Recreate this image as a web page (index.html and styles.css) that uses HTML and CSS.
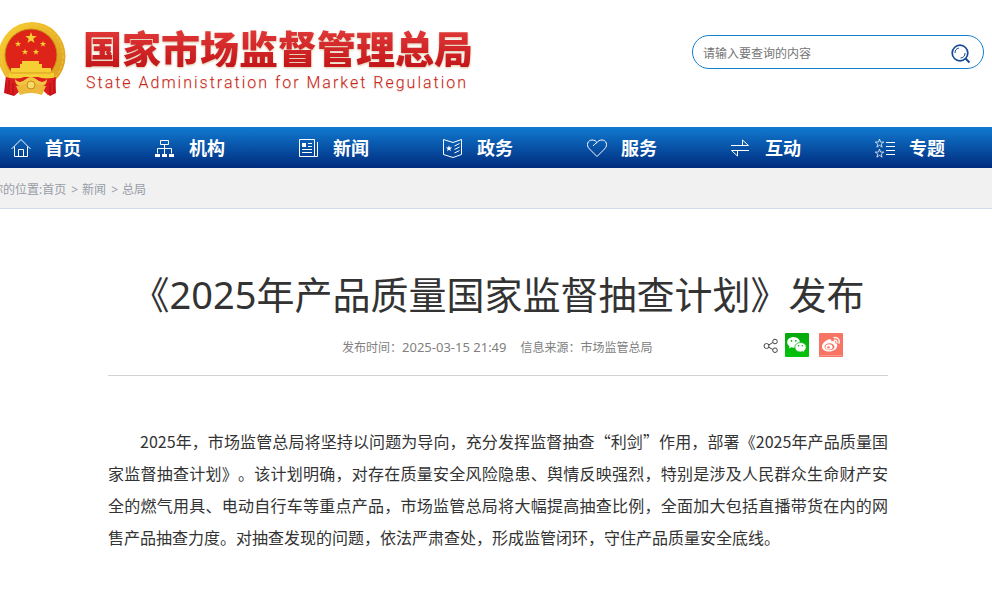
FILE: index.html
```html
<!DOCTYPE html>
<html lang="zh-CN">
<head>
<meta charset="utf-8">
<meta name="viewport" content="width=device-width, initial-scale=1">
<title>《2025年产品质量国家监督抽查计划》发布</title>
<link rel="stylesheet" href="styles.css">
</head>
<body>
<svg class="defs" width="0" height="0" aria-hidden="true">
  <defs>
    <linearGradient id="gold" x1="0" y1="0" x2="1" y2="1">
      <stop offset="0" stop-color="#f8d030"/><stop offset=".5" stop-color="#eab52a"/><stop offset="1" stop-color="#d99a1c"/>
    </linearGradient>
    <linearGradient id="green" x1="0" y1="0" x2="0" y2="1">
      <stop offset="0" stop-color="#04a80c"/><stop offset="1" stop-color="#06c40c"/>
    </linearGradient>
    <path id="star" d="M0-6 1.4-1.9 5.7-1.9 2.3.7 3.5 4.9 0 2.4-3.5 4.9-2.3.7-5.7-1.9-1.4-1.9Z"/>
  </defs>
</svg>

<header class="header">
  <a class="brand" href="#">
    <svg class="emblem" viewBox="0 0 66 76" aria-hidden="true">
      <path d="M6 54 4 72 14 75 20 70 44 70 50 75 56 72 55 54Z" fill="#c9131a"/>
      <ellipse cx="32" cy="35" rx="33.500" ry="34" fill="url(#gold)"/>
      <ellipse cx="32" cy="35" rx="31" ry="31.500" fill="none" stroke="#f2cb42" stroke-width="1" stroke-dasharray="3 2"/>
      <circle cx="31" cy="34" r="26" fill="#de2418" stroke="#c78c18"/>
      <g fill="#f6cf35">
        <use href="#star" transform="translate(31 17)"/>
        <use href="#star" transform="translate(18 23) scale(.55)"/>
        <use href="#star" transform="translate(43 23) scale(.55)"/>
        <use href="#star" transform="translate(25 31) scale(.55)"/>
        <use href="#star" transform="translate(36 31) scale(.55)"/>
        <path d="M22 40H39V43H42V47H51V52H54V57H9V52H11V47H20V43H22Z"/>
      </g>
      <path d="M11 52H51" stroke="#d99b24"/>
      <path d="M6 56Q17 59 24 56L38 56Q47 59 56 56L55 71 48 74 42 68H21L15 74 8 71Z" fill="#dc1c1e"/>
      <path d="M15 58Q19 64 26 58 31 54 36 58 43 64 47 58 47 67 37 64 31 61 25 64 15 67 15 58Z" fill="#f2c641"/>
      <path d="M16 65Q31 60 46 65L42 74Q31 70 20 74Z" fill="#edb93b"/>
      <path d="M9 59V71M13 62V73M50 62V73M54 59V71" stroke="#a90d14" stroke-width="1"/>
      <circle cx="31" cy="64" r="4" fill="#f8dc68" stroke="#c7891c"/>
    </svg>
    <span class="brand-text">
      <span class="brand-name">国家市场监督管理总局</span>
      <span class="brand-en">State Administration for Market Regulation</span>
    </span>
  </a>
  <form class="search">
    <input type="text" aria-label="查询内容" placeholder="请输入要查询的内容">
    <button type="button" aria-label="查询">
      <svg viewBox="0 0 20 20" fill="none" stroke="#164a94" aria-hidden="true"><circle cx="9" cy="9" r="7.800" stroke-width="1.700"/><path d="M14.500 14.500 18.500 18.500" stroke-width="2"/><path d="M4 9A5 5 0 0 1 8 4M14 9A5 5 0 0 1 9.500 14" stroke-width="1"/></svg>
    </button>
  </form>
</header>

<nav class="nav">
  <a href="#"><svg viewBox="0 0 20 20"><path d="M.5 11 10 1.500 19.500 11M3.500 8.500V18.500H16.500V8.500M7.500 18.500V11.500H12.500V18.500"/></svg>首页</a>
  <a href="#"><svg viewBox="0 0 20 20"><path d="M5.500 2.500H13.500V6.500H5.500ZM9.500 6.500V16M2.500 15.500V10.500H16.500V15.500"/><path class="solid" d="M0 16H5V19H0ZM7 16H12V19H7ZM14 16H19V19H14Z"/></svg>机构</a>
  <a href="#"><svg viewBox="0 0 20 20"><path d="M.5 1.500H15.500V18.500H.5ZM15.500 18.500H18.500V4M9 5.500H13M9 8.500H13M3 11.500H13M3 14.500H13"/><path class="solid" d="M3 5H7V9H3Z"/></svg>新闻</a>
  <a href="#"><svg viewBox="0 0 20 20"><path d="M.5 1.500 10 4.500 18.500 1.500V16.500L10 19.500.5 16.500ZM11.500 8 16.500 5.500M11.500 11.500 16.500 9M11.500 15 16.500 12.500"/><use class="solid" href="#star" transform="translate(6 10.500) scale(.55)"/></svg>政务</a>
  <a href="#"><svg viewBox="0 0 20 20"><path d="M10 18.500 2.500 11C-1.500 7 1 2 5 2 7.500 2 9 3 10 4.500 11 3 12.500 2 15 2 19 2 21.500 7 17.500 11ZM6 8Q7.500 6 10 4.500"/></svg>服务</a>
  <a href="#"><svg viewBox="0 0 20 20"><path d="M0 7.500H17.500L11.500 2V7M18 12.500H.5L6.500 18V13"/></svg>互动</a>
  <a href="#"><svg viewBox="0 0 20 20"><use href="#star" transform="translate(4.500 5.500) scale(.75)"/><use href="#star" transform="translate(4.500 15.500) scale(.75)"/><path d="M11 4.500H20M11 8.500H20M11 12.500H20M11 16.500H20"/></svg>专题</a>
</nav>

<div class="crumbs">
  <p>你的位置:<a href="#">首页</a><span class="sep">&gt;</span><a href="#">新闻</a><span class="sep">&gt;</span><a href="#">总局</a></p>
</div>

<main class="article">
  <h1>《2025年产品质量国家监督抽查计划》发布</h1>
  <div class="meta">
    <p>发布时间：<time>2025-03-15 21:49</time><span class="source">信息来源：市场监管总局</span></p>
    <div class="share">
      <svg class="share-icon" viewBox="0 0 16 16" fill="none" stroke="#444" aria-hidden="true"><circle cx="3.500" cy="9" r="2.500"/><circle cx="12" cy="4.500" r="2.300"/><circle cx="12" cy="13.200" r="2.300"/><path d="M5.700 8 9.800 5.500M5.700 10.200 9.800 12.500"/></svg>
      <a href="#" aria-label="微信"><svg viewBox="0 0 24 24"><rect width="24" height="24" rx="1" fill="url(#green)"/><path d="M8.500 4C4.800 4 2.200 6.300 2.200 9.300 2.200 11 3.100 12.500 4.600 13.500L4 15.600 6.400 14.300Q8 14.800 10 14.600 14.900 13.800 15 9.300 14.500 4.500 8.500 4Z" fill="#fff"/><path d="M15.500 9.500C12.200 9.500 9.800 11.600 9.800 14.200S12.200 19 15.500 19Q16.700 19 17.700 18.600L19.700 19.700 19.200 17.900Q21.300 16.500 21.300 14.200C21.300 11.600 18.800 9.500 15.500 9.500Z" fill="#fff" stroke="#06b80c" stroke-width=".8"/><g fill="#06b00c"><circle cx="6.500" cy="7.800" r=".9"/><circle cx="10.800" cy="7.800" r=".9"/><circle cx="13.600" cy="12.800" r=".8"/><circle cx="17.300" cy="12.800" r=".8"/></g></svg></a>
      <a href="#" aria-label="微博"><svg viewBox="0 0 24 24"><rect width="24" height="24" rx="1" fill="#f87464"/><path d="M1 22.500H23" stroke="#fba99e" stroke-width=".7"/><path d="M9.500 6.500C12 5.500 12.800 6.800 12.300 8.500 14.500 7.600 17 7.700 16.300 10.200 18 10.800 18.700 12 18 14 17 16.800 13.500 18.500 10 18.500 6 18.500 3 16.500 3 13.700 3 10.800 6 7.700 9.500 6.500Z" fill="#fff"/><ellipse cx="10.500" cy="13.800" rx="5" ry="3.500" fill="#f87464"/><ellipse cx="10" cy="14" rx="3.500" ry="2.800" fill="#fff"/><circle cx="9.500" cy="14.400" r="1.200" fill="#f87464"/><path d="M15 4.700C18.500 3.800 21.300 7 20 10.300M15.300 7.200C17.200 6.800 18.400 8.200 17.800 9.800" fill="none" stroke="#fff" stroke-width="1.300" stroke-linecap="round"/></svg></a>
    </div>
  </div>
  <p class="body-text">2025年，市场监管总局将坚持以问题为导向，充分发挥监督抽查“利剑”作用，部署《2025年产品质量国家监督抽查计划》。该计划明确，对存在质量安全风险隐患、舆情反映强烈，特别是涉及人民群众生命财产安全的燃气用具、电动自行车等重点产品，市场监管总局将大幅提高抽查比例，全面加大包括直播带货在内的网售产品抽查力度。对抽查发现的问题，依法严肃查处，形成监管闭环，守住产品质量安全底线。</p>
</main>
</body>
</html>
```
FILE: styles.css
```css
* { box-sizing: border-box; }

body {
  margin: 0;
  background: #fff;
  color: #333;
  font: 12px/20px "Noto Sans", "Noto Sans CJK SC", sans-serif;
  text-spacing-trim: space-all;
  overflow-x: hidden;
}

a { color: inherit; text-decoration: none; }
svg { display: block; }
.defs { position: absolute; }

.header {
  display: flex;
  justify-content: space-between;
  align-items: flex-start;
  padding: 21px 8px 0 0;
  height: 127px;
}

.brand { display: flex; gap: 17px; }
.emblem { width: 66px; height: 76px; }
.brand-text { padding-top: 6px; }
.brand-name,
.brand-en { display: block; white-space: nowrap; }
.brand-name {
  font: 900 39px/40px "Noto Sans CJK SC", sans-serif;
  color: transparent;
  background: linear-gradient(#e23a3a, #c4161a);
  background-clip: text;
  filter: drop-shadow(0 1px 1px #d9c0a0);
}
.brand-en {
  padding: 4px 0 0 3px;
  color: #cc2020;
  font: 300 16px/24px Roboto, "Liberation Sans", sans-serif;
  letter-spacing: 2px;
  text-shadow: 0 1px 1px #e0cdb8;
}

.search {
  display: flex;
  align-items: center;
  width: 292px;
  height: 34px;
  margin-top: 14px;
  padding: 3px 12px 0 10px;
  border: 1px solid #1480cc;
  border-radius: 17px;
}
.search input {
  flex: 1;
  min-width: 0;
  padding: 0;
  border: 0;
  outline: 0;
  background: none;
  font: inherit;
}
.search input::placeholder { color: #757575; }
.search button { padding: 0; border: 0; background: none; cursor: pointer; }
.search svg { width: 20px; height: 20px; }

.nav {
  display: flex;
  height: 41px;
  overflow: hidden;
  background: linear-gradient(#107ad0, #002b7d);
}
.nav a {
  display: flex;
  flex: 0 0 144px;
  align-items: center;
  gap: 14px;
  padding-left: 11px;
  color: #fff;
  font-size: 18px;
  font-weight: 700;
}
.nav svg {
  width: 20px;
  height: 20px;
  fill: none;
  stroke: #fff;
}
.nav .solid { fill: #fff; stroke: none; }

.crumbs {
  overflow: hidden;
  border-bottom: 1px solid #cfdcea;
  background: #f1f1f1;
  color: #979ca6;
}
.crumbs p {
  margin: 0 0 0 -9px;
  padding-top: 4px;
  line-height: 36px;
  white-space: nowrap;
}
.sep { padding: 0 4px 0 5px; }

.article { max-width: 780px; margin: 0 104px 0 108px; }
h1 {
  margin: 0;
  padding-top: 58px;
  color: #333;
  font-size: 38px;
  line-height: 54px;
  font-weight: 400;
  text-align: center;
  white-space: nowrap;
}
.meta {
  display: flex;
  align-items: flex-start;
  justify-content: space-between;
  height: 55px;
  padding: 12px 45px 0 234px;
  border-bottom: 1px solid #d2d2d2;
  color: #808080;
  white-space: nowrap;
}
.meta p { margin: 0; line-height: 28px; }
.meta time { font-size: 13px; }
.source { margin-left: 14px; }
.share { display: flex; align-items: center; gap: 10px; }
.share-icon { width: 16px; height: 16px; margin-right: -4px; }
.share a svg { width: 24px; height: 24px; }

.body-text {
  margin: 49px 0 0;
  font: 16px/32px "Noto Sans CJK SC", sans-serif;
  text-align: justify;
  text-indent: 32px;
}
```
